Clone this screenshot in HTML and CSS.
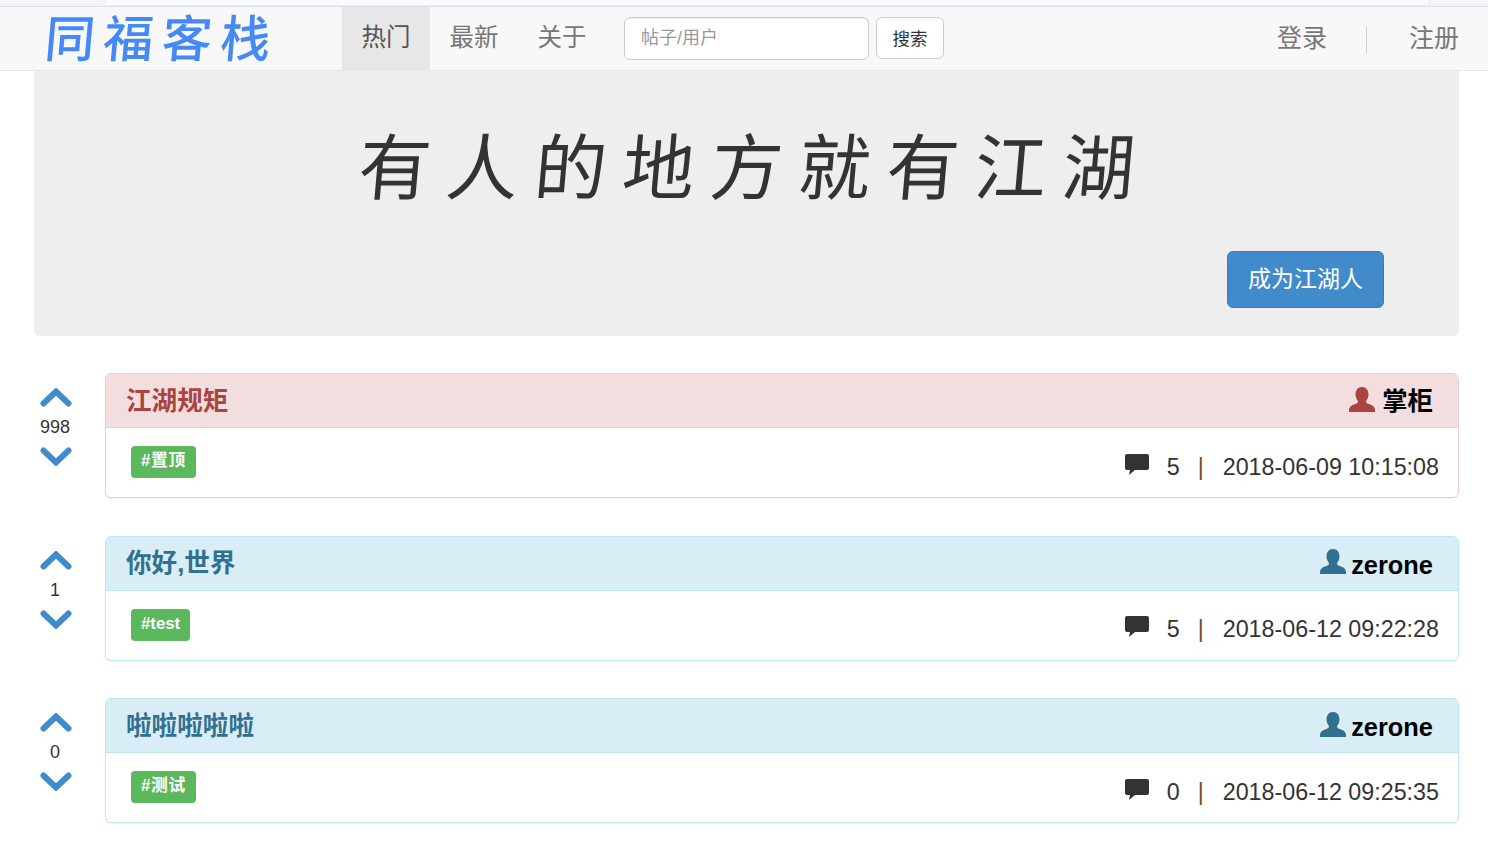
FILE: index.html
```html
<!DOCTYPE html>
<html lang="zh-CN">
<head>
<meta charset="utf-8">
<title>同福客栈</title>
<link rel="stylesheet" href="styles.css">
</head>
<body>
<div class="top-strip"><div class="top-strip-inner"></div></div>
<nav class="navbar">
  <a class="brand">同福客栈</a>
  <ul class="nav-list">
    <li class="nav-item active">热门</li>
    <li class="nav-item">最新</li>
    <li class="nav-item">关于</li>
  </ul>
  <form class="search">
    <input class="search-input" type="text" placeholder="帖子/用户">
    <button class="search-btn" type="button">搜索</button>
  </form>
  <div class="nav-right">
    <a class="nav-link">登录</a>
    <span class="nav-sep"></span>
    <a class="nav-link">注册</a>
  </div>
</nav>
<main class="container">
  <section class="jumbotron">
    <h1 class="motto">有人的地方就有江湖</h1>
    <div class="jumbo-action"><button class="join-btn" type="button">成为江湖人</button></div>
  </section>

  <article class="post">
    <div class="vote">
      <svg class="chev" viewBox="0 0 32 19"><path d="M3.5 15.5 16 3.5l12.500 12"/></svg>
      <span class="score">998</span>
      <svg class="chev" viewBox="0 0 32 19"><path d="M3.5 3.5 16 15.5l12.500-12"/></svg>
    </div>
    <div class="panel panel-danger">
      <header class="panel-head">
        <h3 class="panel-title">江湖规矩</h3>
        <div class="author">
          <svg class="user-icon" viewBox="0 0 26 25"><path d="M13 0c4 0 6.500 3 6.500 7.500 0 3-1.200 5-2.500 6.500 0 2 1 2.500 4 3.500 3 1 4.500 2.500 5 5V25H0v-2.500c.5-2.500 2-4 5-5 3-1 4-1.500 4-3.500-1.300-1.500-2.500-3.500-2.500-6.500C6.500 3 9 0 13 0z"/></svg>
          <span class="name-cjk">掌柜</span>
        </div>
      </header>
      <div class="panel-body">
        <span class="tag tag-cjk">#置顶</span>
        <div class="meta">
          <svg class="comment-icon" viewBox="0 0 24 21"><path d="M2 0h20a2 2 0 0 1 2 2v12a2 2 0 0 1-2 2H10l-6 5 1-5H2a2 2 0 0 1-2-2V2a2 2 0 0 1 2-2z"/></svg>
          <span class="count">5</span>
          <span class="bar">|</span>
          <time class="date">2018-06-09 10:15:08</time>
        </div>
      </div>
    </div>
  </article>

  <article class="post">
    <div class="vote">
      <svg class="chev" viewBox="0 0 32 19"><path d="M3.5 15.5 16 3.5l12.500 12"/></svg>
      <span class="score">1</span>
      <svg class="chev" viewBox="0 0 32 19"><path d="M3.5 3.5 16 15.5l12.500-12"/></svg>
    </div>
    <div class="panel panel-info">
      <header class="panel-head">
        <h3 class="panel-title">你好,世界</h3>
        <div class="author">
          <svg class="user-icon" viewBox="0 0 26 25"><path d="M13 0c4 0 6.500 3 6.500 7.500 0 3-1.200 5-2.500 6.500 0 2 1 2.500 4 3.500 3 1 4.500 2.500 5 5V25H0v-2.500c.5-2.500 2-4 5-5 3-1 4-1.500 4-3.500-1.300-1.500-2.500-3.500-2.500-6.500C6.500 3 9 0 13 0z"/></svg>
          <span class="name-latin">zerone</span>
        </div>
      </header>
      <div class="panel-body">
        <span class="tag">#test</span>
        <div class="meta">
          <svg class="comment-icon" viewBox="0 0 24 21"><path d="M2 0h20a2 2 0 0 1 2 2v12a2 2 0 0 1-2 2H10l-6 5 1-5H2a2 2 0 0 1-2-2V2a2 2 0 0 1 2-2z"/></svg>
          <span class="count">5</span>
          <span class="bar">|</span>
          <time class="date">2018-06-12 09:22:28</time>
        </div>
      </div>
    </div>
  </article>

  <article class="post">
    <div class="vote">
      <svg class="chev" viewBox="0 0 32 19"><path d="M3.5 15.5 16 3.5l12.500 12"/></svg>
      <span class="score">0</span>
      <svg class="chev" viewBox="0 0 32 19"><path d="M3.5 3.5 16 15.5l12.500-12"/></svg>
    </div>
    <div class="panel panel-info">
      <header class="panel-head">
        <h3 class="panel-title">啦啦啦啦啦</h3>
        <div class="author">
          <svg class="user-icon" viewBox="0 0 26 25"><path d="M13 0c4 0 6.500 3 6.500 7.500 0 3-1.200 5-2.500 6.500 0 2 1 2.500 4 3.500 3 1 4.500 2.500 5 5V25H0v-2.500c.5-2.500 2-4 5-5 3-1 4-1.500 4-3.500-1.300-1.500-2.500-3.500-2.500-6.500C6.500 3 9 0 13 0z"/></svg>
          <span class="name-latin">zerone</span>
        </div>
      </header>
      <div class="panel-body">
        <span class="tag tag-cjk">#测试</span>
        <div class="meta">
          <svg class="comment-icon" viewBox="0 0 24 21"><path d="M2 0h20a2 2 0 0 1 2 2v12a2 2 0 0 1-2 2H10l-6 5 1-5H2a2 2 0 0 1-2-2V2a2 2 0 0 1 2-2z"/></svg>
          <span class="count">0</span>
          <span class="bar">|</span>
          <time class="date">2018-06-12 09:25:35</time>
        </div>
      </div>
    </div>
  </article>
</main>
</body>
</html>
```

FILE: styles.css
```css
* { box-sizing: border-box; }
html, body { margin: 0; padding: 0; }
body {
  background: #fff;
  color: #333;
  font-family: "Liberation Sans", "Noto Sans CJK SC", sans-serif;
  font-size: 18px;
  overflow: hidden;
  height: 853px;
}
.top-strip { height: 6px; background: #f4f5f8; padding: 0 60px 0 105px; }
.top-strip-inner { height: 5px; background: #fafbfc; box-shadow: 0 1px 4px rgba(0,0,0,.06); }
.navbar {
  display: flex;
  align-items: stretch;
  height: 65px;
  background: #f8f8f8;
  border-top: 1px solid #dde3ee;
  border-bottom: 1px solid #e7e7e7;
}
.brand {
  width: 342px;
  padding: 2px 0 0 45px;
  font-size: 50px;
  line-height: 63px;
  letter-spacing: 8.5px;
  color: #4589f7;
  white-space: nowrap;
  font-weight: 500;
  transform: skewX(-5deg);
}
.nav-list { display: flex; list-style: none; margin: 0; padding: 0; }
.nav-item {
  width: 88px;
  text-align: center;
  font-size: 24.5px;
  line-height: 61px;
  color: #777;
}
.nav-item.active { background: #e7e7e7; color: #555; }
.search { display: flex; align-items: flex-start; margin-left: 18px; padding-top: 10px; gap: 7px; }
.search-input {
  width: 245px;
  height: 43px;
  padding: 0 16px;
  border: 1px solid #ccc;
  border-radius: 6px;
  font-family: inherit;
  font-size: 18px;
  box-shadow: inset 0 1px 1px rgba(0,0,0,.075);
}
.search-input::placeholder { color: #999; }
.search-btn {
  width: 68px;
  height: 42px;
  padding: 0 0 2px;
  border: 1px solid #ccc;
  border-radius: 6px;
  background: #fff;
  color: #333;
  font-family: inherit;
  font-size: 17.5px;
}
.nav-right { display: flex; align-items: center; margin-left: auto; padding-right: 29px; }
.nav-link { font-size: 25px; color: #777; line-height: 61px; }
.nav-sep { width: 1px; height: 26px; margin: 2px 42px 0 39px; background: #ccc; }
.container { padding: 0 29px 0 34px; }
.jumbotron {
  height: 265px;
  background: #eee;
  border-radius: 0 0 6px 6px;
  margin-bottom: 37px;
}
.motto {
  margin: 0;
  padding: 55px 0 0 18px;
  height: 180px;
  text-align: center;
  font-size: 72px;
  line-height: 1.2;
  font-weight: 400;
  letter-spacing: 16px;
  color: #333;
  white-space: nowrap;
  transform: skewX(-5deg);
}
.jumbo-action { display: flex; justify-content: flex-end; padding-right: 75px; }
.join-btn {
  width: 157px;
  height: 57px;
  padding: 0 0 5px;
  border: 1px solid #357ebd;
  border-radius: 6px;
  background: #428bca;
  color: #fff;
  font-family: inherit;
  font-size: 23px;
}
.post { display: flex; margin-bottom: 37.5px; }
.vote {
  width: 71px;
  flex: none;
  display: flex;
  flex-direction: column;
  padding-top: 15px;
}
.chev { width: 32px; height: 19px; margin-left: 6px; display: block; }
.chev path { fill: none; stroke: #428bca; stroke-width: 6px; stroke-linecap: round; stroke-linejoin: miter; }
.score { width: 42px; text-align: center; font-size: 18px; line-height: 26px; margin: 7px 0; color: #333; }
.panel {
  flex: 1;
  height: 125px;
  display: flex;
  flex-direction: column;
  background: #fff;
  border: 1px solid;
  border-radius: 6px;
  box-shadow: 0 1px 1px rgba(0,0,0,.05);
  overflow: hidden;
}
.panel-danger { border-color: #ebccd1; }
.panel-info { border-color: #bce8f1; }
.panel-head {
  height: 54px;
  flex: none;
  display: flex;
  align-items: center;
  justify-content: space-between;
  padding: 0 25px 0 20px;
  border-bottom: 1px solid;
}
.panel-danger .panel-head { background: #f2dede; border-color: #ebccd1; color: #a94442; }
.panel-info .panel-head { background: #d9edf7; border-color: #bce8f1; color: #31708f; }
.panel-title { margin: 0; font-size: 25.6px; line-height: 30px; font-weight: 700; }
.author { display: flex; align-items: center; gap: 6px; font-size: 25.4px; line-height: 30px; font-weight: 700; color: #000; }
.name-cjk { margin-left: 1px; }
.name-latin { margin: 3px 0 0 -1px; }
.user-icon { width: 26px; height: 25px; flex: none; margin-top: -3px; }
.panel-danger .user-icon { fill: #a94442; }
.panel-info .user-icon { fill: #31708f; }
.panel-body {
  flex: 1;
  display: flex;
  align-items: flex-start;
  justify-content: space-between;
  padding: 18px 19px 0 25px;
}
.tag {
  display: inline-block;
  height: 32px;
  padding: 0 10px;
  border-radius: 4px;
  background: #5cb85c;
  color: #fff;
  font-size: 16.8px;
  font-weight: 700;
  line-height: 30px;
}
.tag-cjk { letter-spacing: .7px; }
.meta { display: flex; align-items: center; height: 42px; font-size: 23.3px; color: #333; }
.comment-icon { width: 24px; height: 21px; fill: #333; margin: -6px 18px 0 0; }
.count { width: 31px; }
.bar { width: 25px; color: #7a4a20; }
.date { white-space: nowrap; }
```
